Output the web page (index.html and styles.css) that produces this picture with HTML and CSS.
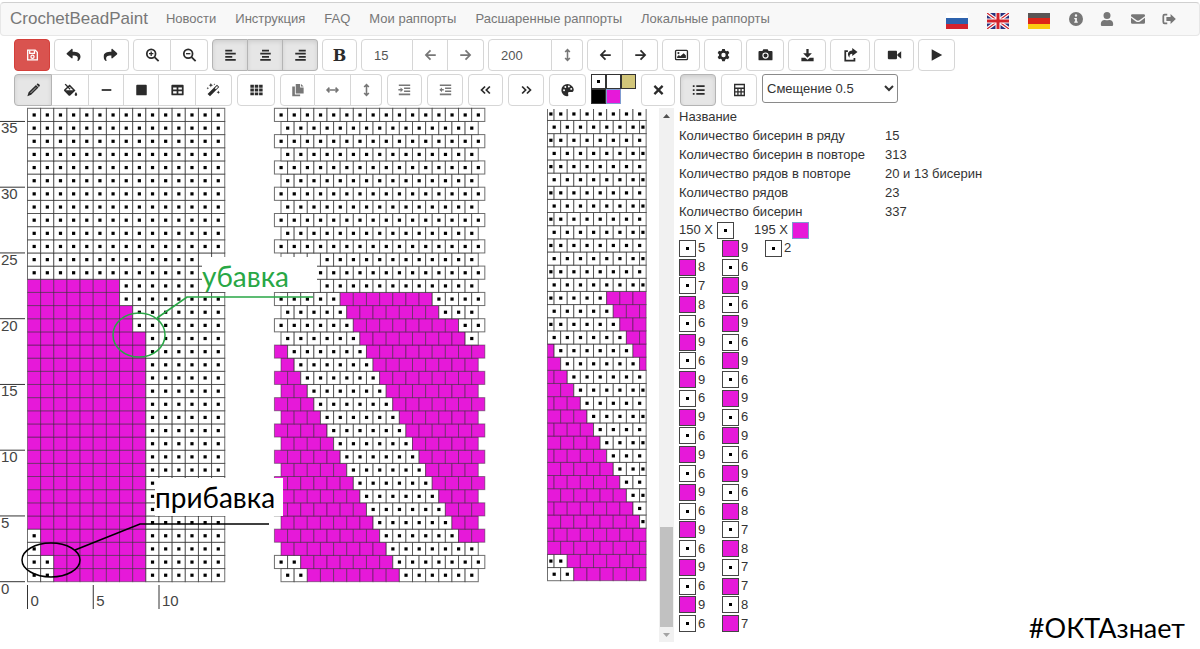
FILE: index.html
```html
<!DOCTYPE html>
<html lang="ru">
<head>
<meta charset="utf-8">
<title>CrochetBeadPaint</title>
<link rel="stylesheet" href="styles.css">
</head>
<body>
<svg class="sprite" aria-hidden="true">
  <symbol id="save" viewBox="0 0 16 16"><path class="ln" d="M2.5 2.5h8.6l2.4 2.4v8.6h-11z"/><path class="ln" d="M4.8 2.8v3.4h5.4V2.8"/><circle class="ln" cx="8" cy="10" r="1.8"/></symbol>
  <symbol id="undo" viewBox="0 0 512 512"><path d="M8.3 189.8L184.3 37.9C199.7 24.5 224 35.300 224 56v80c160.600 1.800 288 34 288 186.300 0 61.400-39.600 122.300-83.300 154.100-13.700 9.900-33.100-2.500-28.100-18.600 45.300-145-21.500-183.500-176.600-185.800V360c0 20.700-24.300 31.500-39.700 18.200l-176-152c-11.100-9.600-11.100-26.800 0-36.400z"/></symbol>
  <symbol id="redo" viewBox="0 0 512 512"><use href="#undo" transform="matrix(-1 0 0 1 512 0)" width="512" height="512"/></symbol>
  <symbol id="zoomin" viewBox="0 0 16 16"><circle class="ln2" cx="6.500" cy="6.500" r="5"/><path class="ln2" d="M10.300 10.300l4.700 4.700"/><path class="ln" d="M6.500 4v5M4 6.500h5"/></symbol>
  <symbol id="zoomout" viewBox="0 0 16 16"><circle class="ln2" cx="6.500" cy="6.500" r="5"/><path class="ln2" d="M10.300 10.300l4.700 4.700"/><path class="ln" d="M4 6.500h5"/></symbol>
  <symbol id="left" viewBox="0 0 16 16"><path class="ln2" d="M2 3h8M2 6.500h12M2 10h8M2 13.500h12"/></symbol>
  <symbol id="center" viewBox="0 0 16 16"><path class="ln2" d="M4 3h8M2 6.500h12M4 10h8M2 13.500h12"/></symbol>
  <symbol id="right" viewBox="0 0 16 16"><path class="ln2" d="M6 3h8M2 6.500h12M6 10h8M2 13.500h12"/></symbol>
  <symbol id="arrl" viewBox="0 0 16 16"><path class="ln2" d="M14 8H3M8 2.800L2.800 8 8 13.200"/></symbol>
  <symbol id="arrr" viewBox="0 0 16 16"><path class="ln2" d="M2 8h11M8 2.800L13.200 8 8 13.200"/></symbol>
  <symbol id="vert" viewBox="0 0 16 16"><path class="ln3" d="M8 2v12M5.300 4.500L8 1.800l2.700 2.700M5.300 11.500L8 14.200l2.700-2.700"/></symbol>
  <symbol id="horz" viewBox="0 0 16 16"><path class="ln3" d="M2 8h12M4.500 5.300L1.800 8l2.700 2.700M11.500 5.300L14.200 8l-2.700 2.700"/></symbol>
  <symbol id="image" viewBox="0 0 16 16"><rect class="ln" x="1.200" y="2.700" width="13.600" height="10.600" rx="1"/><circle cx="4.500" cy="5.800" r="1.200"/><path d="M3 11.500V10l2-2 1.500 1.500L10.500 6 13 8.500v3z"/></symbol>
  <symbol id="gear" viewBox="0 0 16 16"><path fill-rule="evenodd" d="M6.500 1h3l.5 2 1.200.7 2-.6 1.500 2.600-1.500 1.500v1.600l1.500 1.500-1.500 2.600-2-.6-1.200.7-.5 2h-3L6 13l-1.200-.7-2 .6-1.500-2.600 1.500-1.500V7.200L1.300 5.700l1.500-2.600 2 .6L6 3zM8 5.500a2.500 2.500 0 1 0 0 5 2.500 2.500 0 0 0 0-5z"/></symbol>
  <symbol id="camera" viewBox="0 0 16 16"><path fill-rule="evenodd" d="M1 3.500h3.500L5.500 1.500h5l1 2H15q1 0 1 1V13q0 1-1 1H1q-1 0-1-1V4.500q0-1 1-1zM8 5a3.600 3.600 0 1 0 0 7.200A3.600 3.600 0 0 0 8 5zm0 1.300a2.300 2.300 0 1 1 0 4.600 2.300 2.300 0 0 1 0-4.600z"/></symbol>
  <symbol id="download" viewBox="0 0 16 16"><path d="M6.700 1h2.600v5H13L8 11 3 6h3.700zM1 11h4.300L8 13.500l2.700-2.500H15v4H1z"/></symbol>
  <symbol id="share" viewBox="0 0 16 16"><path class="ln2" d="M5 3.500H2v11h10.500v-3"/><path d="M10 0l6 4.500L10 9V6.500C7.500 6.500 6.500 8 7 11 3.500 7.500 5 3 10 2.800z"/></symbol>
  <symbol id="video" viewBox="0 0 18 16"><rect x="1" y="3" width="11" height="10" rx="1"/><path d="M12.500 7L17 3.500v9L12.500 9z"/></symbol>
  <symbol id="play" viewBox="0 0 16 16"><path d="M2.500 1.500L14.500 8l-12 6.500z"/></symbol>
  <symbol id="pencil" viewBox="0 0 16 16"><path d="M11.500 1.500l1-.8q.8-.3 1.500.4l1 1q.6.800 0 1.500l-1 1zM10.800 2.200L13.700 5.100 5.300 13.500 1 15l1.400-4.400z"/><path d="M4.500 11.500L11 5" stroke="#e6e6e6" stroke-width=".8"/></symbol>
  <symbol id="bucket" viewBox="0 0 18 16"><path fill-rule="evenodd" d="M2 1.500L3.200.5 6 3.200 8 1.500 15 8.500 8.700 14.500q-1 .8-2 0L1.500 9.300q-.8-1 0-1.800L4.800 4.300zM6 5.500L3.200 8.200h9L8 4l-.8.600 2 2L8 7.600z"/><path d="M15.500 10.500q3 4 0 4.800-3-.8 0-4.800z"/></symbol>
  <symbol id="line" viewBox="0 0 16 16"><path class="ln2" d="M2.500 8h11"/></symbol>
  <symbol id="square" viewBox="0 0 16 16"><rect x="2" y="2" width="12" height="12" rx="1"/></symbol>
  <symbol id="table" viewBox="0 0 16 16"><path fill-rule="evenodd" d="M2 2h12q1 0 1 1v10q0 1-1 1H2q-1 0-1-1V3q0-1 1-1zM3 5v2.500h4V5zm6 0v2.500h4V5zM3 9.500V12h4V9.500zm6 0V12h4V9.500z"/></symbol>
  <symbol id="wand" viewBox="0 0 16 16"><path fill-rule="evenodd" d="M12 2l2.500 2.500L4 15 1.200 12.500zM12 3.500L9.500 6l1.200 1.200 2.500-2.500z"/><path d="M5 0l.7 1.800 1.800.7-1.800.7L5 5l-.7-1.800-1.800-.7 1.800-.7zM13.500 8.500l.6 1.400 1.400.6-1.400.6-.6 1.400-.6-1.400-1.400-.6 1.400-.6zM1.500 4.500l.4 1 1 .4-1 .4-.4 1-.4-1-1-.4 1-.4zM9 .5l.3.700.700.3-.700.3-.3.700-.3-.700-.700-.3.700-.3z"/></symbol>
  <symbol id="grid" viewBox="0 0 16 16"><path d="M1 2h4v3.300H1zM6 2h4v3.300H6zM11 2h4v3.300h-4zM1 6.400h4v3.300H1zM6 6.400h4v3.300H6zM11 6.400h4v3.300h-4zM1 10.800h4v3.300H1zM6 10.800h4v3.300H6zM11 10.800h4v3.300h-4z"/></symbol>
  <symbol id="copy" viewBox="0 0 16 16"><path d="M6 1h5v4h4v7H6zM12 1l3 3h-3zM2 4h3v9h6v2H2z"/></symbol>
  <symbol id="indent" viewBox="0 0 16 16"><path class="ln3" d="M1.500 2.500h13M7.500 6h7M7.500 9.500h7M1.500 13h13M1 7.800h4"/><path d="M3.500 5L6.500 7.800l-3 2.800z"/></symbol>
  <symbol id="outdent" viewBox="0 0 16 16"><path class="ln3" d="M1.500 2.500h13M7.500 6h7M7.500 9.500h7M1.500 13h13M2 7.800h4"/><path d="M4 5L1 7.800l3 2.800z"/></symbol>
  <symbol id="dbll" viewBox="0 0 16 16"><path class="ln2" d="M7.500 4L3.500 8l4 4M13 4L9 8l4 4"/></symbol>
  <symbol id="dblr" viewBox="0 0 16 16"><path class="ln2" d="M3 4l4 4-4 4M8.500 4l4 4-4 4"/></symbol>
  <symbol id="palette" viewBox="0 0 16 16"><path fill-rule="evenodd" d="M8 1a7 7 0 0 0-7 7c0 5 5 8 7.500 6.800 1.300-.8-.5-2.800.4-4 1-1.200 3.600.2 5.300-.8C17 7 13 1 8 1zM4 7.200a1.100 1.100 0 1 0 .1 2.200A1.100 1.100 0 0 0 4 7.200zM5.500 3.500a1.100 1.100 0 1 0 .1 2.200 1.100 1.100 0 0 0-.1-2.200zM9.500 2.800a1.100 1.100 0 1 0 .1 2.200 1.100 1.100 0 0 0-.1-2.200zM12.200 5.600a1.100 1.100 0 1 0 .1 2.200 1.100 1.100 0 0 0-.1-2.200z"/></symbol>
  <symbol id="cross" viewBox="0 0 16 16"><path d="M3.300 3.300l9.400 9.400M12.700 3.300l-9.400 9.400" stroke="currentColor" stroke-width="2.600"/></symbol>
  <symbol id="list" viewBox="0 0 16 16"><path class="ln2" d="M5.500 3.500H15M5.500 8H15M5.500 12.500H15M1.500 3.500h2M1.500 8h2M1.500 12.500h2"/></symbol>
  <symbol id="calc" viewBox="0 0 16 16"><path class="ln" d="M2.500 1.700h11v12.600h-11zM2.500 6h11M2.500 10.200h11M6.200 6v8M9.800 6v8"/></symbol>
  <symbol id="info" viewBox="0 0 16 16"><path fill-rule="evenodd" d="M8 0a8 8 0 1 0 0 16A8 8 0 0 0 8 0zM8 2.600a1.400 1.400 0 1 1 0 2.800 1.400 1.400 0 0 1 0-2.800zM6 6.800h3v4h1v1.500H6v-1.500h1V8.300H6z"/></symbol>
  <symbol id="user" viewBox="0 0 448 512"><path d="M224 256a128 128 0 1 0 0-256 128 128 0 0 0 0 256zm90 32h-17c-46 21-100 21-146 0h-17C60 288 0 348 0 422v42c0 26 22 48 48 48h352c26 0 48-22 48-48v-42c0-74-60-134-134-134z"/></symbol>
  <symbol id="mail" viewBox="0 0 16 16"><path d="M1.500 2.500h13q1.500 0 1.500 1.500v.8L9.500 9.500q-1.500 1-3 0L0 4.800V4q0-1.500 1.500-1.500zM0 6.500L6 11q2 1 4 0l6-4.500V12q0 1.500-1.500 1.500h-13Q0 13.500 0 12z"/></symbol>
  <symbol id="logout" viewBox="0 0 16 16"><path class="ln2" d="M6 3H3Q1.500 3 1.500 4.500v7Q1.500 13 3 13h3"/><path d="M9.800 2.300L15.800 8l-6 5.700V10.300H5V5.700h4.800z"/></symbol>
</svg>

<header class="navbar">
  <a class="brand" href="#">CrochetBeadPaint</a>
  <nav class="menu">
    <a href="#">Новости</a><a href="#">Инструкция</a><a href="#">FAQ</a><a href="#">Мои раппорты</a><a href="#">Расшаренные раппорты</a><a href="#">Локальные раппорты</a>
  </nav>
  <div class="langs">
    <a href="#" aria-label="Русский"><svg class="flag" viewBox="0 0 22 16"><path fill="#fff" d="M0 0h22v6H0z"/><path fill="#2d62ad" d="M0 5h22v6H0z"/><path fill="#d3222c" d="M0 11h22v5H0z"/></svg></a>
    <a href="#" aria-label="English"><svg class="flag" viewBox="0 0 22 16"><path fill="#28307c" d="M0 0h22v16H0z"/><path stroke="#fff" stroke-width="3.500" d="M0 0l22 16M22 0L0 16"/><path stroke="#d3222c" stroke-width="1.200" d="M0 0l22 16M22 0L0 16"/><path stroke="#fff" stroke-width="5" d="M11 0v16M0 8h22"/><path stroke="#d3222c" stroke-width="3" d="M11 0v16M0 8h22"/></svg></a>
    <a href="#" aria-label="Deutsch"><svg class="flag" viewBox="0 0 22 16"><path fill="#5a5555" d="M0 0h22v6H0z"/><path fill="#dd2418" d="M0 5h22v6H0z"/><path fill="#fbcb12" d="M0 11h22v5H0z"/></svg></a>
  </div>
  <div class="account">
    <a href="#" aria-label="О программе"><svg><use href="#info"/></svg></a>
    <a href="#" aria-label="Профиль"><svg><use href="#user"/></svg></a>
    <a href="#" aria-label="Почта"><svg><use href="#mail"/></svg></a>
    <a href="#" aria-label="Выход"><svg><use href="#logout"/></svg></a>
  </div>
</header>

<div class="toolbar">
  <button class="btn w36 danger" aria-label="Сохранить"><svg><use href="#save"/></svg></button>
  <div class="group"><button class="btn w38" aria-label="Отменить"><svg><use href="#undo"/></svg></button><button class="btn w37" aria-label="Повторить"><svg><use href="#redo"/></svg></button></div>
  <div class="group"><button class="btn w38" aria-label="Увеличить"><svg><use href="#zoomin"/></svg></button><button class="btn w37" aria-label="Уменьшить"><svg><use href="#zoomout"/></svg></button></div>
  <div class="group"><button class="btn w36 active" aria-label="Слева"><svg><use href="#left"/></svg></button><button class="btn w35 active" aria-label="По центру"><svg><use href="#center"/></svg></button><button class="btn w35 active" aria-label="Справа"><svg><use href="#right"/></svg></button></div>
  <button class="btn w35 bold">B</button>
  <div class="group"><input class="num w52" value="15" aria-label="Ширина"><button class="btn w35 muted" aria-label="Уже"><svg><use href="#arrl"/></svg></button><button class="btn w36 muted" aria-label="Шире"><svg><use href="#arrr"/></svg></button></div>
  <div class="group"><input class="num w64" value="200" aria-label="Высота"><button class="btn w31 muted" aria-label="Изменить высоту"><svg><use href="#vert"/></svg></button></div>
  <div class="group"><button class="btn w36" aria-label="Сдвиг влево"><svg><use href="#arrl"/></svg></button><button class="btn w35" aria-label="Сдвиг вправо"><svg><use href="#arrr"/></svg></button></div>
  <button class="btn w38" aria-label="Изображение"><svg><use href="#image"/></svg></button>
  <button class="btn w38" aria-label="Настройки"><svg><use href="#gear"/></svg></button>
  <button class="btn w38" aria-label="Снимок"><svg><use href="#camera"/></svg></button>
  <button class="btn w38" aria-label="Скачать"><svg><use href="#download"/></svg></button>
  <button class="btn w40" aria-label="Поделиться"><svg><use href="#share"/></svg></button>
  <button class="btn w40" aria-label="Видео"><svg><use href="#video"/></svg></button>
  <button class="btn w37" aria-label="Пуск"><svg><use href="#play"/></svg></button>
</div>

<div class="toolbar tools">
  <div class="group"><button class="btn w38 active" aria-label="Карандаш"><svg><use href="#pencil"/></svg></button><button class="btn w37" aria-label="Заливка"><svg><use href="#bucket"/></svg></button><button class="btn w35" aria-label="Линия"><svg><use href="#line"/></svg></button><button class="btn w35" aria-label="Прямоугольник"><svg><use href="#square"/></svg></button><button class="btn w37" aria-label="Таблица"><svg><use href="#table"/></svg></button><button class="btn w36" aria-label="Волшебная палочка"><svg><use href="#wand"/></svg></button></div>
  <button class="btn w38" aria-label="Сетка"><svg><use href="#grid"/></svg></button>
  <div class="group"><button class="btn w35 muted" aria-label="Копировать"><svg><use href="#copy"/></svg></button><button class="btn w36 muted" aria-label="Отразить по горизонтали"><svg><use href="#horz"/></svg></button><button class="btn w31 muted" aria-label="Отразить по вертикали"><svg><use href="#vert"/></svg></button></div>
  <button class="btn w35 muted" aria-label="Вставить ряд"><svg><use href="#indent"/></svg></button>
  <button class="btn w36 muted" aria-label="Удалить ряд"><svg><use href="#outdent"/></svg></button>
  <button class="btn w35" aria-label="В начало"><svg><use href="#dbll"/></svg></button>
  <button class="btn w36" aria-label="В конец"><svg><use href="#dblr"/></svg></button>
  <button class="btn w37" aria-label="Палитра"><svg><use href="#palette"/></svg></button>
  <div class="colors">
    <button class="color dot" aria-label="Белый с точкой"></button><button class="color" aria-label="Белый"></button><button class="color sand" aria-label="Песочный"></button><button class="color black" aria-label="Чёрный"></button><button class="color pink chosen" aria-label="Розовый"></button>
  </div>
  <button class="btn w34" aria-label="Очистить"><svg><use href="#cross"/></svg></button>
  <button class="btn w36 active" aria-label="Список"><svg><use href="#list"/></svg></button>
  <button class="btn w36" aria-label="Калькулятор"><svg><use href="#calc"/></svg></button>
  <select class="shift" aria-label="Смещение"><option>Смещение 0.5</option></select>
</div>

<main class="work">
  <svg class="canvas" id="canvas" viewBox="0 0 659 534" role="img" aria-label="Схема"></svg>
  <div class="scrollbar">
    <svg viewBox="0 0 15 15"><path fill="#505050" d="M4 10l3.500-4L11 10z"/></svg>
    <div class="track"><div class="thumb"></div></div>
    <svg viewBox="0 0 15 15"><path fill="#a3a3a3" d="M4 6l3.500 4L11 6z"/></svg>
  </div>
  <section class="info">
    <table class="facts">
      <tr><th>Название</th><td></td></tr>
      <tr><th>Количество бисерин в ряду</th><td>15</td></tr>
      <tr><th>Количество бисерин в повторе</th><td>313</td></tr>
      <tr><th>Количество рядов в повторе</th><td>20 и 13 бисерин</td></tr>
      <tr><th>Количество рядов</th><td>23</td></tr>
      <tr><th>Количество бисерин</th><td>337</td></tr>
    </table>
    <div class="totals"><span class="total">150 X <i class="bead dot"></i></span><span class="total">195 X <i class="bead pink chosen"></i></span></div>
    <div class="runs" id="runs"></div>
  </section>
</main>
<div class="tag">#ОКТАзнает</div>
<script src="script.js"></script>
</body>
</html>
```

FILE: styles.css
```css
* { box-sizing: border-box; }
body { margin: 0; background: #fff; color: #333; font: 13px/18px "Liberation Sans", Arial, sans-serif; overflow: hidden; }
a { color: #777; text-decoration: none; }
button, input, select { font: inherit; color: inherit; margin: 0; padding: 0; }
.sprite { position: absolute; width: 0; height: 0; }
.ln, .ln2, .ln3 { fill: none; stroke: currentColor; stroke-width: 1.5; }
.ln2 { stroke-width: 2; }
.ln3 { stroke-width: 1.8; }

.navbar { display: flex; align-items: center; height: 34px; margin-top: 2px; padding: 0 23px 0 9px; background: #f8f8f8; border: 1px solid #e7e7e7; border-top-color: #d0d0d0; border-radius: 4px; }
.brand { font-size: 17px; }
.menu { display: flex; flex: 1; gap: 19px; margin-left: 18px; white-space: nowrap; }
.langs { display: flex; gap: 19px; margin: 4px 19px 0 0; }
.flag { display: block; width: 22px; height: 16px; }
.account { display: flex; gap: 17px; }
.account svg { display: block; width: 14px; height: 14px; fill: currentColor; }

.toolbar { display: flex; gap: 4px; height: 32px; margin: 3px 0 0 14px; }
.tools { gap: 5px; }
.group { display: flex; }
.btn { display: flex; align-items: center; justify-content: center; height: 32px; background: #fff; border: 1px solid #d6d6d6; border-radius: 4px; color: #2b2b2b; }
.btn svg { width: 15px; height: 14px; fill: currentColor; }
.group > * + * { border-left: 0; }
.group > :not(:first-child) { border-top-left-radius: 0; border-bottom-left-radius: 0; }
.group > :not(:last-child) { border-top-right-radius: 0; border-bottom-right-radius: 0; }
.btn.active { background: #e6e6e6; border-color: #b4b4b4; box-shadow: inset 0 2px 4px #0000001a; }
.btn.danger { background: #d9534f; border-color: #d43f3a; color: #fff; }
.btn.muted { color: #777; }
.btn.bold { font: bold 16px "DejaVu Serif", serif; }
.num { height: 32px; padding-left: 12px; border: 1px solid #d6d6d6; border-radius: 4px; color: #555; }
.w31 { width: 31px; } .w34 { width: 34px; } .w35 { width: 35px; } .w36 { width: 36px; }
.w37 { width: 37px; } .w38 { width: 38px; } .w40 { width: 40px; } .w52 { width: 52px; } .w64 { width: 64px; }

.colors { display: grid; grid-template-columns: repeat(3, 15px); grid-auto-rows: 15px; }
.color { position: relative; background: #fff; border: 1px solid #333; }
.dot::after { content: ""; position: absolute; inset: 0; width: 3px; height: 3px; margin: auto; background: #000; }
.color.sand { background: #d2c67a; }
.color.black { background: #000; }
.color.pink, .bead.pink { background: #e619d9; }
.color.chosen, .bead.chosen { border: 1px solid #7f9bd0; }
.shift { width: 136px; height: 29px; padding-left: 0; background: #fff; border: 1px solid #8a8a8a; border-radius: 3px; }

.work { display: flex; margin-top: 2px; }
.canvas { flex: none; width: 659px; height: 534px; overflow: visible; }
.canvas text { font-size: 15px; fill: #444; }
.canvas .note { font: 28px Lato, "Open Sans", sans-serif; }
.canvas .green { fill: #28a745; }
.canvas .dark { fill: #000; }
.scrollbar { display: flex; flex-direction: column; width: 15px; height: 534px; background: #f1f1f1; }
.scrollbar svg { width: 15px; height: 15px; }
.track { display: flex; flex: 1; align-items: flex-end; justify-content: center; }
.thumb { width: 13px; height: 100px; background: #c1c1c1; }
.info { flex: 1; padding-left: 5px; }
.facts { height: 113px; border-collapse: collapse; }
.facts th { width: 206px; padding: 0; text-align: left; font-weight: normal; }
.facts td { padding: 0; }
.totals { display: flex; gap: 20px; height: 18px; }
.total { display: flex; align-items: center; gap: 4px; }
.bead { position: relative; flex: none; width: 17px; height: 17px; border: 1px solid #444; background: #fff; }
.runs { display: grid; grid-auto-flow: column; grid-template-rows: repeat(21, 1fr); grid-auto-columns: 43px; height: 394px; }
.run { display: flex; align-items: center; gap: 2px; }
.tag { position: absolute; right: 15px; bottom: 4px; color: #000; font: 27px/34px Lato, "Open Sans", sans-serif; }
```

FILE: script.js
```js
const NS = "http://www.w3.org/2000/svg";
const canvas = document.getElementById("canvas");
const CELL = 13.15, ROWS = 36, BOTTOM = 473.7, PINK = "#e619d9";

function add(name, attrs, text) {
  const el = document.createElementNS(NS, name);
  for (const key in attrs) el.setAttribute(key, attrs[key]);
  if (text) el.textContent = text;
  canvas.appendChild(el);
  return el;
}

function bead(x, y, w, pink) {
  add("rect", { x, y, width: w, height: CELL, fill: pink ? PINK : "#fff", stroke: "#222", "stroke-opacity": pink ? .45 : .65, "stroke-width": 1 });
  if (!pink) add("rect", { x: x + w / 2 - 1.5, y: y + CELL / 2 - 1.5, width: 3.2, height: 3.2 });
}

// Flat chart: [first pink column, end of pink columns] for each row, bottom to top
function flatSpan(r) {
  if (r < 2) return [2, 9];
  if (r < 4) return [1, 9];
  if (r < 19) return [0, 9];
  if (r < 21) return [0, 8];
  return r < 23 ? [0, 7] : [0, 0];
}
for (let r = 0; r < ROWS; r++) {
  const [from, to] = flatSpan(r);
  for (let c = 0; c < 15; c++) bead(27.5 + c * CELL, BOTTOM - (r + 1) * CELL, CELL, c >= from && c < to);
}

// Brick chart: run lengths, white first
const brick = [[2, 7, 6], [2, 7, 7], [0, 8, 7], [0, 8, 6, 2]];
for (let r = 4; r < 18; r++) {
  const first = 9 - Math.floor(r / 2);
  brick.push([0, first, 6, 15 + r % 2 - 6 - first]);
}
brick.push([6, 8, 1], [6, 8, 2], [5, 7, 3], [5, 7, 4]);
for (let r = 22; r < ROWS; r++) brick.push([15 + r % 2]);

function drawBrick(x0, bottom, width) {
  brick.forEach((runs, r) => {
    let x = x0 - (r % 2) * CELL / 2;
    runs.forEach((n, i) => {
      for (let k = 0; k < n; k++, x += CELL) {
        const a = width ? Math.max(x, x0) : x;
        const b = width ? Math.min(x + CELL, x0 + width) : x + CELL;
        if (b - a > 1) bead(a, bottom - (r + 1) * CELL, b - a, i % 2 === 1);
      }
    });
  });
}
drawBrick(281, BOTTOM, 0);
drawBrick(547.5, BOTTOM - 1, 7.5 * CELL);
add("rect", { x: 540, y: -2, width: 110, height: 3, fill: "#fff" });

for (let n = 0; n <= 35; n += 5) {
  const y = BOTTOM - n * CELL;
  add("path", { d: `M0 ${y}H25`, stroke: "#333" });
  add("text", { x: 1, y: y + 12 }, String(n));
}
for (let n = 0; n <= 10; n += 5) {
  const x = 27.5 + n * CELL;
  add("path", { d: `M${x} 477V501`, stroke: "#333" });
  add("text", { x: x + 3, y: 498 }, String(n));
}

add("rect", { x: 202, y: 149, width: 115, height: 35, fill: "#fff" });
add("path", { d: "M313 189H187L157 210", fill: "none", stroke: "#28a745", "stroke-width": 1.7 });
add("ellipse", { cx: 139, cy: 227, rx: 26, ry: 22, fill: "none", stroke: "#28a745", "stroke-width": 1.5 });
add("text", { x: 202, y: 179, class: "note green" }, "убавка");
add("rect", { x: 155, y: 370, width: 128, height: 38, fill: "#fff" });
add("path", { d: "M269 416H140L75 442", fill: "none", stroke: "#000", "stroke-width": 1.7 });
add("ellipse", { cx: 51, cy: 452, rx: 29, ry: 17, fill: "none", stroke: "#000", "stroke-width": 1.5 });
add("text", { x: 155, y: 400, class: "note dark" }, "прибавка");

const columns = [
  [5, 8, 7, 8, 6, 9, 6, 9, 6, 9, 6, 9, 6, 9, 6, 9, 6, 9, 6, 9, 6],
  [9, 6, 9, 6, 9, 6, 9, 6, 9, 6, 9, 6, 9, 6, 8, 7, 8, 7, 7, 8, 7],
  [2]
];
const runs = document.getElementById("runs");
columns.flat().forEach((n, i) => {
  const row = document.createElement("div");
  row.className = "run";
  const mark = document.createElement("i");
  mark.className = i % 2 ? "bead pink" : "bead dot";
  row.append(mark, String(n));
  runs.append(row);
});
```
